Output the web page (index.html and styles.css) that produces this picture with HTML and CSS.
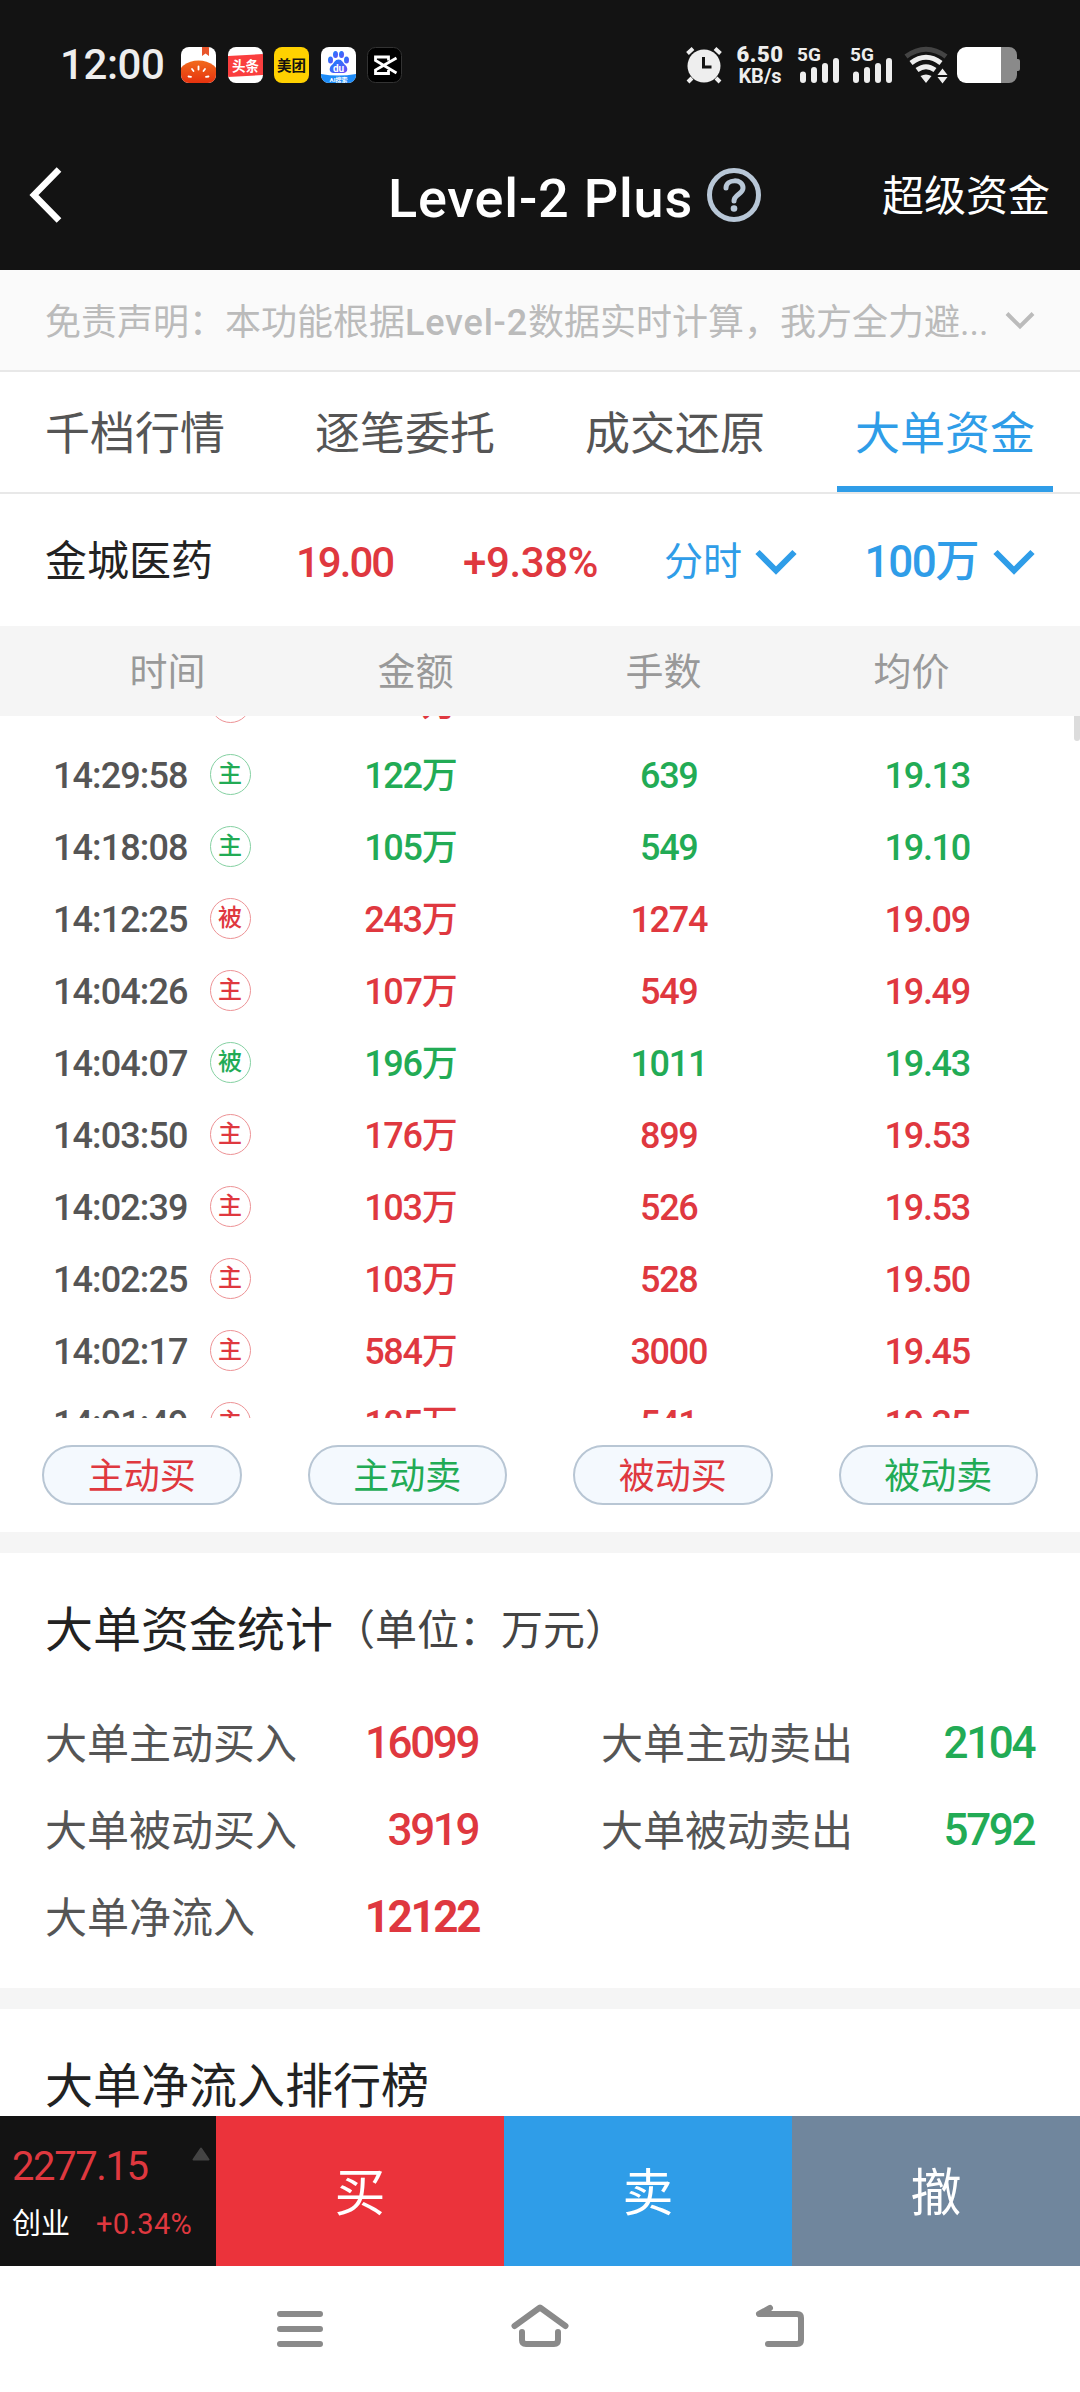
FILE: index.html
```html
<!DOCTYPE html>
<html lang="zh-CN">

<head>
  <meta charset="utf-8" />
  <meta name="viewport" content="width=device-width, initial-scale=1.0">
  <title>Level-2 Plus</title>
  <link rel="stylesheet" href="styles.css">
</head>

<body>
  <header class="top">
    <div class="statusbar">
      <span class="clock">12:00</span>
      <div class="apps">
        <svg class="app" viewBox="0 0 35 36">
          <defs>
            <clipPath id="r"><rect width="35" height="36" rx="8" /></clipPath>
            <linearGradient id="tomato" x1="0" y1="0" x2="0" y2="1">
              <stop offset="0" stop-color="#f26a1c" />
              <stop offset="1" stop-color="#e01808" />
            </linearGradient>
            <linearGradient id="paw" x1="0" y1="0" x2="1" y2="1">
              <stop offset="0" stop-color="#1583ff" />
              <stop offset="1" stop-color="#6a4cf5" />
            </linearGradient>
          </defs>
          <g clip-path="url(#r)">
            <rect width="35" height="36" fill="#fff" />
            <path d="M21 0h7v9l-3.500-2.500L21 9z" fill="#e8552b" />
            <ellipse cx="17.500" cy="30" rx="21" ry="16.500" fill="url(#tomato)" />
            <path d="M17.500 19.500v3M11 22l1.500 2M24 22l-1.500 2M7.500 29.500l2.500 .4M27.500 29.500l-2.500 .4" stroke="#fff" stroke-width="1.800" stroke-linecap="round" />
          </g>
        </svg>
        <svg class="app" viewBox="0 0 35 36">
          <g clip-path="url(#r)">
            <rect width="35" height="36" fill="#fff" />
            <path d="M0 9l35-2v21L0 30z" fill="#fa3e3e" />
            <text x="17.500" y="23.500" font-size="13.500" class="app-text" fill="#fff">头条</text>
          </g>
        </svg>
        <svg class="app" viewBox="0 0 35 36">
          <rect width="35" height="36" rx="8" fill="#ffd100" />
          <text x="17.500" y="23.500" font-size="14.500" class="app-text" fill="#111">美团</text>
        </svg>
        <svg class="app" viewBox="0 0 35 36">
          <g clip-path="url(#r)">
            <rect width="35" height="36" fill="#fff" />
            <g fill="url(#paw)">
              <ellipse cx="9.500" cy="13" rx="2.500" ry="3.500" />
              <ellipse cx="14.500" cy="7.500" rx="2.500" ry="3.500" />
              <ellipse cx="20.500" cy="7.500" rx="2.500" ry="3.500" />
              <ellipse cx="25.500" cy="13" rx="2.500" ry="3.500" />
              <path d="M17.500 12.500c3.500 0 4.500 3.500 7 5.800 3.500 3.500 1.500 8-2.500 7.700h-9c-4 .3-6-4.200-2.500-7.700 2.500-2.300 3.500-5.800 7-5.800z" />
            </g>
            <text x="17.500" y="24.500" font-size="10" class="app-text" fill="#fff">du</text>
            <path d="M0 27q17 3 35 0v9H0z" fill="#1d8cf8" />
            <text x="17.500" y="34.500" font-size="6" class="app-text" fill="#fff">AI搜索</text>
          </g>
        </svg>
        <svg class="app" viewBox="0 0 35 36">
          <rect x=".5" y=".5" width="34" height="35" rx="8" fill="#000" stroke="#333" />
          <path d="M29.500 11L8.500 23v3.500h13v-3.500M29.500 26L8.500 13.500V10h13v3.500" fill="none" stroke="#fff" stroke-width="2.800" />
        </svg>
      </div>
      <div class="sys">
        <svg class="alarm" width="38" height="38" viewBox="0 0 38 38">
          <circle cx="19" cy="20" r="16.500" fill="#eee" />
          <path d="M2.500 7.500L8 2.500M35.500 7.500L30 2.500M7 32l-4 4M31 32l4 4" stroke="#eee" stroke-width="4" />
          <path d="M18.500 11v10h8" fill="none" stroke="#131313" stroke-width="3" />
        </svg>
        <div class="speed"><b>6.50</b><span>KB/s</span></div>
        <svg class="signal" width="42" height="38" viewBox="0 0 42 38">
          <text x="-1" y="15" class="net">5G</text>
          <path d="M2 28.500a3 3 0 0 1 6 0V34a3 3 0 0 1-6 0zM13 24a3 3 0 0 1 6 0v10a3 3 0 0 1-6 0zM24 20a3 3 0 0 1 6 0v14a3 3 0 0 1-6 0zM35 15a3 3 0 0 1 6 0V34a3 3 0 0 1-6 0z" fill="#eee" />
        </svg>
        <svg class="signal" width="42" height="38" viewBox="0 0 42 38">
          <text x="-1" y="15" class="net">5G</text>
          <path d="M2 28.500a3 3 0 0 1 6 0V34a3 3 0 0 1-6 0zM13 24a3 3 0 0 1 6 0v10a3 3 0 0 1-6 0zM24 20a3 3 0 0 1 6 0v14a3 3 0 0 1-6 0zM35 15a3 3 0 0 1 6 0V34a3 3 0 0 1-6 0z" fill="#eee" />
        </svg>
        <svg class="wifi" width="44" height="38" viewBox="0 0 44 38">
          <g fill="none" stroke="#eee" stroke-width="5">
            <path d="M2 10.500Q22-4 42 10.500" stroke="#444" />
            <path d="M7 17q15-11.500 30 0" />
            <path d="M13 24q9-6.500 18 0" />
          </g>
          <path d="M16.500 30q5.500-3 11 0L22 37zM33.500 29l5-6.500 5 6.500zM33.500 31l5 6.500 5-6.500z" fill="#eee" />
        </svg>
        <svg class="battery" width="63" height="36" viewBox="0 0 63 36">
          <path d="M44 0h8a8 8 0 0 1 8 8v4h1a2 2 0 0 1 2 2v8a2 2 0 0 1-2 2h-1v4a8 8 0 0 1-8 8h-8z" fill="#8a8a8a" />
          <path d="M44 0H9a9 9 0 0 0-9 9v18a9 9 0 0 0 9 9h35z" fill="#fff" />
        </svg>
      </div>
    </div>
    <div class="titlebar">
      <svg class="back" width="36" height="58" viewBox="0 0 36 58">
        <path d="M32 3.500L7 29l25 25.500" fill="none" stroke="#fff" stroke-width="6.500" />
      </svg>
      <h1>Level-2 Plus</h1>
      <svg class="help" width="54" height="54" viewBox="0 0 54 54">
        <circle cx="27" cy="27" r="24.500" fill="none" stroke="#b8c7d7" stroke-width="5" />
        <path d="M19 20c0-9 17-10 17 0 0 6-9 6.500-9 13" fill="none" stroke="#b8c7d7" stroke-width="5" stroke-linecap="round" />
        <circle cx="27" cy="40.500" r="3.300" fill="#b8c7d7" />
      </svg>
      <a class="super">超级资金</a>
    </div>
  </header>

  <div class="notice">
    <p>免责声明：本功能根据<span>Level-2</span>数据实时计算，我方全力避...</p>
    <svg width="30" height="20" viewBox="0 0 30 20">
      <path d="M2 3.500l13 13 13-13" fill="none" stroke="#bbb" stroke-width="4" />
    </svg>
  </div>

  <nav class="tabs">
    <a>千档行情</a>
    <a>逐笔委托</a>
    <a>成交还原</a>
    <a class="active">大单资金</a>
  </nav>

  <div class="stock">
    <span class="name">金城医药</span>
    <span class="price">19.00</span>
    <span class="pct">+9.38%</span>
    <span class="select">分时
      <svg width="42" height="26" viewBox="0 0 42 26"><path d="M2.500 3L21 21.500 39.500 3" fill="none" stroke="#2f9de8" stroke-width="6" /></svg>
    </span>
    <span class="select big">100万
      <svg width="42" height="26" viewBox="0 0 42 26"><path d="M2.500 3L21 21.500 39.500 3" fill="none" stroke="#2f9de8" stroke-width="6" /></svg>
    </span>
  </div>

  <div class="thead">
    <span>时间</span><span>金额</span><span>手数</span><span>均价</span>
  </div>
  <div class="list">
    <div class="rows">
      <div class="row red"><time>14:31:13</time><i>主</i><span>104万</span><span>537</span><span>19.47</span></div>
      <div class="row green"><time>14:29:58</time><i>主</i><span>122万</span><span>639</span><span>19.13</span></div>
      <div class="row green"><time>14:18:08</time><i>主</i><span>105万</span><span>549</span><span>19.10</span></div>
      <div class="row red"><time>14:12:25</time><i>被</i><span>243万</span><span>1274</span><span>19.09</span></div>
      <div class="row red"><time>14:04:26</time><i>主</i><span>107万</span><span>549</span><span>19.49</span></div>
      <div class="row green"><time>14:04:07</time><i>被</i><span>196万</span><span>1011</span><span>19.43</span></div>
      <div class="row red"><time>14:03:50</time><i>主</i><span>176万</span><span>899</span><span>19.53</span></div>
      <div class="row red"><time>14:02:39</time><i>主</i><span>103万</span><span>526</span><span>19.53</span></div>
      <div class="row red"><time>14:02:25</time><i>主</i><span>103万</span><span>528</span><span>19.50</span></div>
      <div class="row red"><time>14:02:17</time><i>主</i><span>584万</span><span>3000</span><span>19.45</span></div>
      <div class="row red"><time>14:01:49</time><i>主</i><span>105万</span><span>541</span><span>19.35</span></div>
    </div>
    <div class="scroll"></div>
  </div>

  <div class="filters">
    <button class="red">主动买</button>
    <button class="green">主动卖</button>
    <button class="red">被动买</button>
    <button class="green">被动卖</button>
  </div>

  <section class="stats">
    <h2>大单资金统计<small>（单位：万元）</small></h2>
    <dl>
      <dt>大单主动买入</dt><dd class="red">16099</dd>
      <dt>大单主动卖出</dt><dd class="green">2104</dd>
      <dt>大单被动买入</dt><dd class="red">3919</dd>
      <dt>大单被动卖出</dt><dd class="green">5792</dd>
      <dt>大单净流入</dt><dd class="red net-in">12122</dd>
    </dl>
  </section>

  <section class="rank">
    <h2>大单净流入排行榜</h2>
  </section>

  <footer class="trade">
    <div class="index">
      <div class="line1">2277.15
        <svg width="18" height="14" viewBox="0 0 18 14"><path d="M9 1.500L16.500 12.500h-15z" fill="#444" stroke="#444" stroke-width="2" stroke-linejoin="round" /></svg>
      </div>
      <div class="line2"><span>创业</span><em>+0.34%</em></div>
    </div>
    <a class="buy">买</a>
    <a class="sell">卖</a>
    <a class="cancel">撤</a>
  </footer>

  <div class="sysnav">
    <svg width="60" height="50" viewBox="0 0 60 50"><path d="M10 13h40M10 28h40M10 43h40" /></svg>
    <svg width="60" height="50" viewBox="0 0 60 50"><path d="M4.500 25L30 6.500 55.500 25M12 31v8q0 4 4 4h28q4 0 4-4v-8" /></svg>
    <svg width="60" height="50" viewBox="0 0 60 50"><path d="M20 7L9 13h38q4 0 4 4v22q0 4-4 4H18" /></svg>
  </div>
</body>

</html>
```

FILE: styles.css
```css
* {
  box-sizing: border-box;
}

body {
  margin: 0;
  width: 1080px;
  height: 2392px;
  overflow: hidden;
  display: flex;
  flex-direction: column;
  font-family: Roboto, "Noto Sans CJK SC", sans-serif;
  line-height: 1;
  color: #555;
  background: #fff;
}

h1, h2, p, dl, dd {
  margin: 0;
  font-weight: 400;
}

svg {
  display: block;
  flex: none;
  overflow: visible;
}

.red {
  color: #df383f;
}

.green {
  color: #22ab55;
}

/* header */
.top {
  height: 270px;
  background: #131313;
  color: #fff;
}

.statusbar {
  height: 120px;
  padding: 10px 60px 0 60px;
  display: flex;
  align-items: center;
}

.clock {
  width: 121px;
  font-size: 42px;
  font-weight: 500;
  letter-spacing: -0.400px;
  color: #eee;
}

.apps {
  display: flex;
  gap: 11.600px;
}

.app {
  width: 35px;
  height: 36px;
}

.app-text {
  font-weight: 700;
  text-anchor: middle;
}

.sys {
  margin-left: auto;
  display: flex;
  align-items: center;
}

.alarm {
  margin-right: 1px;
}

.speed {
  width: 48px;
  margin: 0 14px 0 12px;
  color: #eee;
  font-size: 20px;
  font-weight: 700;
  text-align: center;
}

.speed b {
  display: block;
  font-size: 22px;
  letter-spacing: 0.5px;
}

.net {
  font-size: 19px;
  font-weight: 700;
  fill: #eee;
}

.signal {
  margin-right: 11px;
}

.battery {
  margin-left: 9px;
}

.titlebar {
  height: 150px;
  padding: 0 30px 0 27px;
  display: flex;
  align-items: center;
}

.titlebar h1 {
  width: 317px;
  margin-left: 325px;
  padding-top: 7px;
  font-size: 54px;
  font-weight: 500;
  letter-spacing: 0.800px;
  white-space: nowrap;
}

.help {
  margin-left: 2px;
}

.super {
  margin-left: auto;
  padding-top: 3px;
  font-size: 42px;
}

/* disclaimer */
.notice {
  height: 102px;
  padding: 0 45px;
  display: flex;
  align-items: center;
  justify-content: space-between;
  border-bottom: 2px solid #e8e8e8;
  background: #fafafa;
  color: #bbb;
  font-size: 36px;
  white-space: nowrap;
}

.notice p {
  padding-top: 6px;
}

.notice span {
  font-weight: 500;
  letter-spacing: 0.800px;
}

.tabs {
  height: 122px;
  display: flex;
  border-bottom: 2px solid #e8e8e8;
  font-size: 45px;
}

.tabs a {
  width: 216px;
  margin: 0 27px;
  padding-top: 11px;
  display: flex;
  align-items: center;
  justify-content: center;
  border-bottom: 6px solid transparent;
}

.tabs .active {
  color: #2f9de8;
  border-color: #2f9de8;
}

.stock {
  height: 132px;
  padding: 4px 45px 0;
  display: flex;
  align-items: center;
  font-size: 42px;
  white-space: nowrap;
}

.name {
  width: 251px;
  color: #222;
}

.price,
.pct {
  width: 167px;
  padding-top: 2px;
  color: #df383f;
  font-weight: 500;
  letter-spacing: -2px;
}

.pct {
  width: 201px;
  letter-spacing: -0.400px;
}

.select {
  display: flex;
  align-items: center;
  gap: 13px;
  color: #2f9de8;
  font-size: 39px;
}

.big {
  margin-left: auto;
  gap: 15px;
  font-size: 44px;
  font-weight: 500;
  letter-spacing: -1.400px;
}

/* orders */
.thead {
  height: 90px;
  padding: 2px 43.500px 0;
  display: grid;
  grid-template-columns: repeat(4, 248px);
  align-items: center;
  text-align: center;
  background: #f5f5f5;
  color: #999;
  font-size: 38px;
}

.list {
  position: relative;
  height: 702px;
  overflow: hidden;
}

.rows {
  margin-top: -48px;
}

.row {
  height: 72px;
  display: grid;
  grid-template-columns: 155px 126px repeat(3, 258.500px);
  align-items: center;
  font-size: 36px;
  font-weight: 500;
}

.row time {
  padding-left: 53px;
  color: #555;
  letter-spacing: -0.900px;
}

.row span {
  text-align: center;
  letter-spacing: -1.300px;
}

.row i {
  width: 41px;
  height: 41px;
  margin: -4px 0 0 54.500px;
  border: 1.500px solid;
  border-color: color-mix(in srgb, currentColor 55%, white);
  border-radius: 50%;
  font-size: 24px;
  line-height: 39px;
  text-align: center;
  font-style: normal;
}

.scroll {
  position: absolute;
  top: 0;
  right: 0;
  width: 6px;
  height: 25px;
  border-radius: 0 0 3px 3px;
  background: #dcdcdc;
}

.filters {
  height: 114px;
  padding: 27px 42px 0;
  display: flex;
  justify-content: space-between;
}

.filters button {
  width: 199.500px;
  height: 60px;
  padding: 3px 0 0;
  border: 2px solid #b8c6d4;
  border-radius: 30px;
  background: #f4f9fe;
  font-family: inherit;
  font-size: 36px;
  line-height: 1;
}

/* statistics */
.stats {
  height: 456px;
  padding: 54px 45px 0;
  border-top: 21px solid #f5f5f5;
}

h2 {
  font-size: 48px;
  color: #222;
}

h2 small {
  position: relative;
  top: -2px;
  font-size: 42px;
  color: #444;
}

dl {
  margin-top: 46px;
  display: grid;
  grid-template-columns: 290px 144px 262px 1fr;
  grid-auto-rows: 87px;
  align-items: center;
  font-size: 42px;
}

dd {
  padding: 0 1px 3px 0;
  text-align: right;
  font-size: 44px;
  font-weight: 500;
  letter-spacing: -2.400px;
}

dt:nth-of-type(even) {
  padding-left: 122px;
  white-space: nowrap;
}

.net-in {
  padding-right: 0;
  font-weight: 700;
}

.rank {
  height: 128px;
  flex: none;
  padding-top: 54px;
  border-top: 21px solid #f5f5f5;
}

.rank h2 {
  padding-left: 45px;
}

/* trade bar */
.trade {
  height: 150px;
  display: flex;
  color: #fff;
}

.trade a {
  width: 288px;
  display: flex;
  align-items: center;
  justify-content: center;
  font-size: 51px;
  padding-top: 5px;
}

.buy {
  background: #eb333b;
}

.sell {
  background: #2f9de8;
}

.cancel {
  background: #70869d;
}

.index {
  width: 216px;
  padding: 31px 0 0 12px;
  background: #131313;
}

.line1 {
  display: flex;
  width: 198px;
  justify-content: space-between;
  color: #df383f;
  font-size: 40px;
  letter-spacing: -1.400px;
}

.line2 {
  margin-top: 23px;
  display: flex;
  font-size: 29px;
}

.line2 em {
  margin-left: 26px;
  color: #df383f;
  font-style: normal;
  letter-spacing: 0.300px;
}

/* phone navigation */
.sysnav {
  height: 126px;
  padding-top: 35px;
  display: flex;
  justify-content: center;
  gap: 180px;
}

.sysnav path {
  fill: none;
  stroke: #8a8a8a;
  stroke-width: 6;
  stroke-linecap: round;
  stroke-linejoin: round;
}
```
